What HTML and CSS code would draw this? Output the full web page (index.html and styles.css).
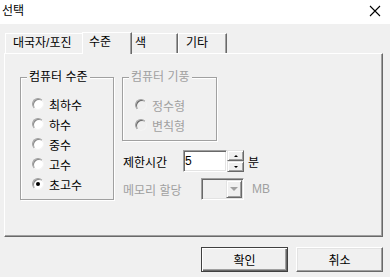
FILE: index.html
```html
<!DOCTYPE html>
<html lang="ko">
<head>
    <title>선택</title>
    <link rel="stylesheet" href="styles.css">
</head>
<body>

    <div class="titlebar">
        <span class="title">선택</span>
        <svg class="close" width="12" height="12" viewBox="0 0 12 12">
            <path d="M1 1 L11 11 M11 1 L1 11" stroke="#000" stroke-width="1.1" fill="none"/>
        </svg>
    </div>

    <div class="client">
        <div class="tabs">
            <div class="tab tab-board">대국자/포진</div>
            <div class="tab tab-level active">수준</div>
            <div class="tab tab-color">색</div>
            <div class="tab tab-etc">기타</div>
        </div>

        <div class="panel">
            <fieldset class="group group-level">
                <legend>컴퓨터 수준</legend>
                <div class="radio-list">
                    <label class="radio"><span class="dot"></span>최하수</label>
                    <label class="radio"><span class="dot"></span>하수</label>
                    <label class="radio"><span class="dot"></span>중수</label>
                    <label class="radio"><span class="dot"></span>고수</label>
                    <label class="radio"><span class="dot checked"></span>초고수</label>
                </div>
            </fieldset>

            <div class="side">
                <fieldset class="group group-style disabled">
                    <legend>컴퓨터 기풍</legend>
                    <div class="radio-list">
                        <label class="radio"><span class="dot"></span>정수형</label>
                        <label class="radio"><span class="dot"></span>변칙형</label>
                    </div>
                </fieldset>

                <div class="field-row time-row">
                    <span class="field-label">제한시간</span>
                    <div class="edit">5</div>
                    <div class="spin">
                        <span class="spin-btn up"></span>
                        <span class="spin-btn down"></span>
                    </div>
                    <span class="unit">분</span>
                </div>

                <div class="field-row memory-row disabled">
                    <span class="field-label">메모리 할당</span>
                    <div class="combo"><span class="combo-btn"></span></div>
                    <span class="unit">MB</span>
                </div>
            </div>
        </div>

        <div class="buttons">
            <button class="btn default">확인</button>
            <button class="btn">취소</button>
        </div>
    </div>

</body>
</html>
```

FILE: styles.css
```css
body {
    margin: 0;
    padding: 0;
    width: 390px;
    height: 277px;
    overflow: hidden;
    background: #f0f0f0;
    font-family: "Liberation Sans", "Noto Sans CJK KR", sans-serif;
    font-size: 12px;
    color: #000;
}

.titlebar {
    height: 24px;
    background: #fff;
    display: flex;
    align-items: center;
    justify-content: space-between;
    padding: 0 9px 0 2px;
}
.title {
    line-height: 14px;
    margin-top: -3px;
}
.close {
    margin-top: -3px;
}

.client {
    padding: 9px 7px 0 4px;
}

/* tabs */
.tabs {
    display: flex;
    align-items: flex-end;
    height: 20px;
    padding-left: 1px;
}
.tab {
    box-sizing: border-box;
    height: 20px;
    line-height: 18px;
    border-top: 1px solid #fff;
    border-left: 1px solid #fff;
    border-right: 1px solid #696969;
    box-shadow: inset -1px 0 0 #a0a0a0;
    white-space: nowrap;
}
.tab.active {
    height: 22px;
    margin-bottom: -1px;
    position: relative;
    z-index: 1;
    background: #f0f0f0;
}
.tab-board { width: 77px; padding-left: 7px; border-right: none; box-shadow: none; }
.tab-level { width: 50px; padding-left: 6px; }
.tab-color { width: 46px; padding-left: 3px; border-left: none; }
.tab-etc { width: 49px; padding-left: 7px; }

/* panel */
.panel {
    box-sizing: border-box;
    height: 184px;
    display: flex;
    gap: 8px;
    padding: 16px 0 0 15px;
    border: 1px solid;
    border-color: #fff #696969 #696969 #fff;
    box-shadow: inset -1px -1px 0 #a0a0a0;
}

.group {
    margin: 0;
    padding: 0 0 5px 0;
    min-width: 0;
    border: 1px solid #a0a0a0;
    box-shadow: inset 1px 1px 0 #fff, 1px 1px 0 #fff;
}
.group legend {
    margin-left: 6px;
    padding: 0 2px;
    line-height: 14px;
    background: #f0f0f0;
}
.group-level { width: 94px; box-sizing: border-box; align-self: flex-start; }
.group-level .radio-list { padding-top: 10px; }
.group-style { width: 95px; box-sizing: border-box; }
.group-style .radio-list { padding-top: 11px; }
.group-style .radio { padding-left: 12px; }

.disabled { color: #a0a0a0; }

.radio {
    display: flex;
    align-items: center;
    height: 20px;
    padding-left: 11px;
    gap: 5px;
}
.dot {
    box-sizing: border-box;
    width: 12px;
    height: 12px;
    border-radius: 50%;
    border: 1px solid;
    border-color: #a0a0a0 #f4f4f4 #f4f4f4 #a0a0a0;
    box-shadow: inset 1px 1px 0 #8a8a8a;
    background: #fff;
    display: flex;
    align-items: center;
    justify-content: center;
}
.disabled .dot {
    background: #f0f0f0;
    box-shadow: inset 1px 1px 0 #696969;
}
.dot.checked::after {
    content: "";
    width: 4px;
    height: 4px;
    border-radius: 50%;
    background: #000;
}

/* right side fields */
.side {
    display: flex;
    flex-direction: column;
    align-items: flex-start;
}
.field-row {
    display: flex;
    align-items: center;
    height: 22px;
}
.time-row { margin-top: 9px; }
.memory-row { margin-top: 6px; }
.field-label { padding-left: 1px; box-sizing: border-box; }
.time-row .field-label { width: 61px; }
.memory-row .field-label { width: 79px; }

.edit {
    box-sizing: border-box;
    width: 44px;
    height: 22px;
    padding-left: 1px;
    line-height: 20px;
    background: #fff;
    border: 1px solid;
    border-color: #a0a0a0 #fff #fff #a0a0a0;
    box-shadow: inset 1px 1px 0 #696969, inset -1px -1px 0 #e3e3e3;
}
.spin {
    display: flex;
    flex-direction: column;
}
.spin-btn {
    box-sizing: border-box;
    width: 17px;
    height: 11px;
    border: 1px solid;
    border-color: #e3e3e3 #696969 #696969 #e3e3e3;
    box-shadow: inset 1px 1px 0 #fff, inset -1px -1px 0 #a0a0a0;
    display: flex;
    align-items: center;
    justify-content: center;
}
.spin-btn.up::after {
    content: "";
    border-left: 2px solid transparent;
    border-right: 2px solid transparent;
    border-bottom: 2px solid #000;
}
.spin-btn.down::after {
    content: "";
    border-left: 2px solid transparent;
    border-right: 2px solid transparent;
    border-top: 2px solid #000;
}
.unit { margin-left: 4px; }
.memory-row .unit { margin-left: 8px; }

.combo {
    box-sizing: border-box;
    width: 43px;
    height: 22px;
    border: 1px solid;
    border-color: #a0a0a0 #fff #fff #a0a0a0;
    box-shadow: inset 1px 1px 0 #696969, inset -1px -1px 0 #e3e3e3;
    display: flex;
    justify-content: flex-end;
    padding: 1px;
}
.combo-btn {
    box-sizing: border-box;
    width: 16px;
    height: 18px;
    border: 1px solid;
    border-color: #e3e3e3 #696969 #696969 #e3e3e3;
    box-shadow: inset 1px 1px 0 #fff, inset -1px -1px 0 #a0a0a0;
    display: flex;
    align-items: center;
    justify-content: center;
}
.combo-btn::after {
    content: "";
    border-left: 4px solid transparent;
    border-right: 4px solid transparent;
    border-top: 4px solid #a0a0a0;
}

/* buttons */
.buttons {
    display: flex;
    justify-content: flex-end;
    gap: 8px;
    margin-top: 10px;
}
.btn {
    box-sizing: border-box;
    width: 87px;
    height: 25px;
    font-family: inherit;
    font-size: 12px;
    color: #000;
    background: #f0f0f0;
    border: 1px solid;
    border-color: #fff #696969 #696969 #fff;
    box-shadow: inset -1px -1px 0 #a0a0a0, inset 1px 1px 0 #e3e3e3;
    padding: 0;
}
.btn.default {
    border-color: #404040;
    box-shadow: inset 1px 1px 0 #fff, inset -1px -1px 0 #696969, inset -2px -2px 0 #a0a0a0;
}
```
